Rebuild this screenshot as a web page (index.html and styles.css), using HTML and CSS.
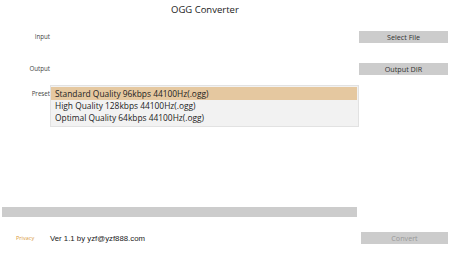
FILE: index.html
```html
<!DOCTYPE html>
<html>
<head>
<meta charset="utf-8">
<link rel="stylesheet" href="styles.css">
</head>
<body>
<div class="app">
  <div class="title">OGG Converter</div>
  <div class="row row-input">
    <div class="label">Input</div>
    <div class="field"></div>
    <div class="btn">Select File</div>
  </div>
  <div class="row row-output">
    <div class="label">Output</div>
    <div class="field"></div>
    <div class="btn">Output DIR</div>
  </div>
  <div class="row row-preset">
    <div class="label label-top">Preset</div>
    <div class="list">
      <div class="item selected">Standard Quality 96kbps 44100Hz(.ogg)</div>
      <div class="item">High Quality 128kbps 44100Hz(.ogg)</div>
      <div class="item">Optimal Quality 64kbps 44100Hz(.ogg)</div>
    </div>
  </div>
  <div class="progress"></div>
  <div class="footer">
    <div class="privacy">Privacy</div>
    <div class="ver">Ver 1.1 by yzf@yzf888.com</div>
    <div class="btn btn-convert">Convert</div>
  </div>
</div>
</body>
</html>
```
FILE: styles.css
```css
html, body {
  margin: 0;
  padding: 0;
  background: #ffffff;
}
.app {
  width: 450px;
  height: 253px;
  display: flex;
  flex-direction: column;
  font-family: "Open Sans", "Noto Sans", sans-serif;
  color: #222;
}
.title {
  height: 20px;
  line-height: 20px;
  padding-left: 171px;
  font-size: 9.5px;
  color: #222;
}
.row {
  display: flex;
  align-items: center;
}
.row-input {
  margin-top: 11px;
  height: 12px;
}
.row-output {
  margin-top: 20px;
  height: 12px;
}
.row-preset {
  margin-top: 10px;
  height: 42px;
  align-items: flex-start;
}
.label {
  width: 50px;
  text-align: right;
  font-size: 6.2px;
  color: #444;
  line-height: 12px;
}
.label-top {
  padding-top: 2px;
  line-height: 13px;
}
.field {
  width: 309px;
}
.btn {
  width: 89px;
  height: 12px;
  line-height: 12px;
  background: #cccccc;
  text-align: center;
  font-size: 7.2px;
  color: #333;
}
.list {
  width: 307px;
  border: 1px solid #e2e2e2;
  background: #f2f2f2;
  padding-top: 1px;
  height: 39px;
}
.item {
  height: 12px;
  line-height: 12px;
  padding-left: 4px;
  font-size: 8.4px;
  color: #222;
}
.item.selected {
  height: 13px;
  line-height: 13px;
  background: #e5c8a0;
  margin-right: 1px;
}
.progress {
  margin-top: 80px;
  margin-left: 2px;
  width: 355px;
  height: 10px;
  background: #cccccc;
}
.footer {
  margin-top: 15px;
  height: 12px;
  display: flex;
  align-items: center;
}
.privacy {
  width: 34px;
  padding-left: 16px;
  box-sizing: border-box;
  font-size: 5.5px;
  color: #d99a40;
}
.ver {
  margin-left: 16px;
  width: 311px;
  font-family: "Liberation Sans", Arial, sans-serif;
  font-size: 7.8px;
  color: #222;
}
.btn-convert {
  width: 87px;
  color: #999;
}
```
